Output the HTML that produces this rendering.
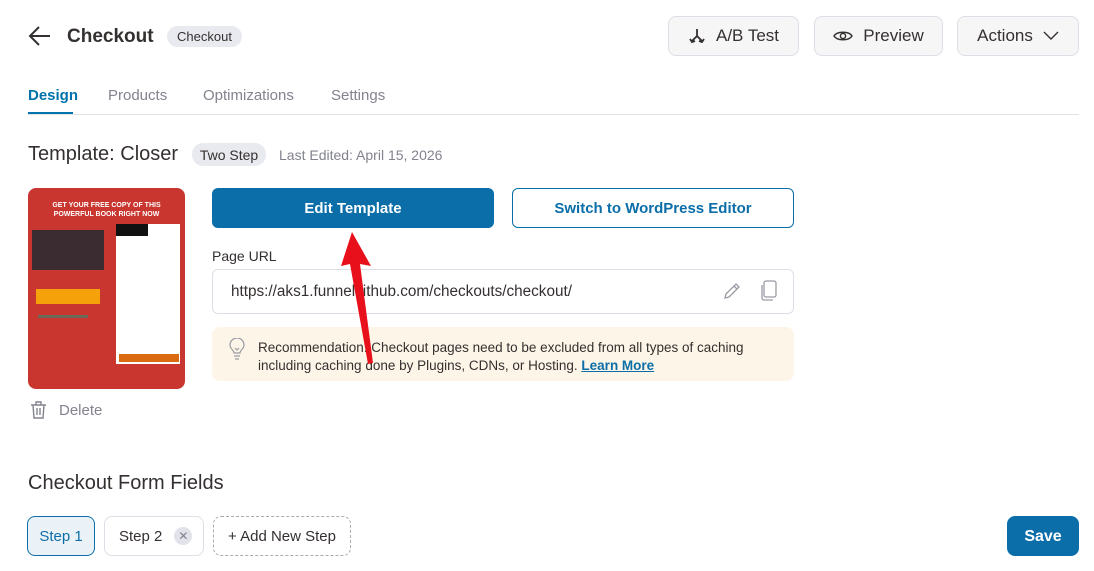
<!DOCTYPE html>
<html><head><meta charset="utf-8"><style>
*{box-sizing:border-box;margin:0;padding:0}
body{width:1094px;height:571px;background:#fff;font-family:"Liberation Sans",sans-serif;color:#353030;position:relative;overflow:hidden}
.a{position:absolute}
.btn{position:absolute;top:16px;height:40px;background:#f6f6f7;border:1px solid #dedfe6;border-radius:8px;font-size:17px;color:#353030;display:flex;align-items:center;justify-content:center;gap:10px}
.tab{position:absolute;top:87px;font-size:15px;color:#82838e}
.badge{position:absolute;background:#e9eaef;border-radius:11px;font-size:13px;color:#353030;display:flex;align-items:center;justify-content:center}
.step{position:absolute;top:516px;height:40px;border-radius:8px;font-size:15px;display:flex;align-items:center;justify-content:center}
</style></head><body>
<svg class="a" style="left:28px;top:25px" width="24" height="22" viewBox="0 0 24 22"><path d="M22 11H3M11 2L2 11l9 9" fill="none" stroke="#353030" stroke-width="2"/></svg>
<div class="a" style="left:67px;top:26px;font-size:19px;font-weight:bold;color:#353030">Checkout</div>
<div class="badge" style="left:167px;top:26px;width:75px;height:21px">Checkout</div>

<div class="btn" style="left:668px;width:131px"><svg width="18" height="18" viewBox="0 0 18 18"><path d="M9 2v7M9 9L4 14M9 9l5 5M2 12l2 3 3-1M16 12l-2 3-3-1" fill="none" stroke="#353030" stroke-width="1.8"/></svg>A/B Test</div>
<div class="btn" style="left:814px;width:129px"><svg width="20" height="14" viewBox="0 0 20 14"><path d="M1 7C4 2 16 2 19 7C16 12 4 12 1 7Z" fill="none" stroke="#353030" stroke-width="1.4"/><circle cx="10" cy="7" r="2.6" fill="none" stroke="#353030" stroke-width="1.4"/></svg>Preview</div>
<div class="btn" style="left:957px;width:122px">Actions<svg width="16" height="10" viewBox="0 0 16 10"><path d="M1 1l7 7 7-7" fill="none" stroke="#353030" stroke-width="1.4"/></svg></div>

<div class="tab" style="left:28px;color:#0073aa;font-weight:bold">Design</div>
<div class="tab" style="left:108px">Products</div>
<div class="tab" style="left:203px">Optimizations</div>
<div class="tab" style="left:331px">Settings</div>
<div class="a" style="left:28px;top:114px;width:1051px;height:1px;background:#e2e3e8"></div>
<div class="a" style="left:28px;top:112px;width:45px;height:2px;background:#0073aa"></div>

<div class="a" style="left:28px;top:143px;font-size:20px;color:#353030">Template: Closer</div>
<div class="badge" style="left:192px;top:143px;width:74px;height:23px;font-size:14px">Two Step</div>
<div class="a" style="left:279px;top:147px;font-size:14px;color:#82838e">Last Edited: April 15, 2026</div>

<div class="a" style="left:28px;top:188px;width:157px;height:201px;background:#c8362f;border-radius:8px;overflow:hidden">
 <div class="a" style="left:0;top:13px;width:157px;text-align:center;color:#fff;font-size:7px;font-weight:bold;line-height:9px">GET YOUR FREE COPY OF THIS<br>POWERFUL BOOK RIGHT NOW</div>
 <div class="a" style="left:4px;top:42px;width:72px;height:40px;background:#3a2c30"></div>
 <div class="a" style="left:8px;top:101px;width:64px;height:15px;background:#f4a10a"></div>
 <div class="a" style="left:10px;top:127px;width:50px;height:3px;background:#6a6a5a"></div>
 <div class="a" style="left:88px;top:36px;width:64px;height:140px;background:#fff"></div>
 <div class="a" style="left:88px;top:36px;width:32px;height:12px;background:#111"></div>
 <div class="a" style="left:91px;top:166px;width:60px;height:8px;background:#d86a10"></div>
</div>
<svg class="a" style="left:30px;top:401px" width="17" height="18" viewBox="0 0 17 18"><path d="M1 4h15M6 4V1h5v3M3 4l1 13h9l1-13M7 7v7M10 7v7" fill="none" stroke="#82838e" stroke-width="1.4"/></svg>
<div class="a" style="left:59px;top:402px;font-size:15px;color:#82838e">Delete</div>

<div class="a" style="left:212px;top:188px;width:282px;height:40px;background:#0b6ea8;border-radius:6px;color:#fff;font-size:15px;font-weight:bold;display:flex;align-items:center;justify-content:center">Edit Template</div>
<div class="a" style="left:512px;top:188px;width:282px;height:40px;border:1px solid #0b6ea8;border-radius:6px;color:#0b6ea8;font-size:15px;font-weight:bold;display:flex;align-items:center;justify-content:center">Switch to WordPress Editor</div>

<div class="a" style="left:212px;top:248px;font-size:14px;color:#353030">Page URL</div>
<div class="a" style="left:212px;top:269px;width:582px;height:45px;border:1px solid #dedfe6;border-radius:6px"></div>
<div class="a" style="left:231px;top:283px;font-size:15.3px;color:#353030">https://aks1.funnelkithub.com/checkouts/checkout/</div>
<svg class="a" style="left:722px;top:281px" width="20" height="20" viewBox="0 0 20 20"><path d="M3 17l1-4L14 3l3 3L7 16z M12 5l3 3" fill="none" stroke="#9a9ba4" stroke-width="1.3"/></svg>
<svg class="a" style="left:760px;top:280px" width="18" height="22" viewBox="0 0 18 22"><rect x="4" y="1" width="12" height="16" rx="2" fill="none" stroke="#9a9ba4" stroke-width="1.3"/><path d="M2 5v13a2 2 0 0 0 2 2h9" fill="none" stroke="#9a9ba4" stroke-width="1.3"/></svg>

<div class="a" style="left:212px;top:327px;width:582px;height:54px;background:#fdf5e7;border-radius:8px"></div>
<svg class="a" style="left:228px;top:338px" width="18" height="22" viewBox="0 0 18 22"><path d="M6 15c0-3-4-4-4-8a7 7 0 0 1 14 0c0 4-4 5-4 8zM6 18h6M7 21h4M7 10l2 2 2-2" fill="none" stroke="#9a9ba4" stroke-width="1.2"/></svg>
<div class="a" style="left:258px;top:339px;font-size:13.5px;line-height:18px;color:#353030">Recommendation: Checkout pages need to be excluded from all types of caching<br>including caching done by Plugins, CDNs, or Hosting. <span style="color:#0b6ea8;font-weight:bold;text-decoration:underline">Learn More</span></div>

<svg class="a" style="left:340px;top:228px" width="40" height="140" viewBox="0 0 40 140"><path d="M12 4L1 38l9-2 18 100 5-1L20 36l11 2z" fill="#e8101a"/></svg>

<div class="a" style="left:28px;top:472px;font-size:20px;color:#353030">Checkout Form Fields</div>
<div class="step" style="left:27px;width:68px;background:#ebf2f7;border:1px solid #0b6ea8;color:#0b6ea8">Step 1</div>
<div class="step" style="left:104px;width:100px;border:1px solid #dedfe6;color:#353030;justify-content:flex-start;padding-left:14px">Step 2<span style="margin-left:12px;width:18px;height:18px;border-radius:50%;background:#e2e3ea;color:#82838e;font-size:12px;display:flex;align-items:center;justify-content:center">✕</span></div>
<div class="step" style="left:213px;width:138px;border:1px dashed #a9aab2;color:#353030">+ Add New Step</div>
<div class="step" style="left:1007px;width:72px;background:#0b6ea8;color:#fff;font-weight:bold;font-size:16px;padding-top:2px">Save</div>
</body></html>
